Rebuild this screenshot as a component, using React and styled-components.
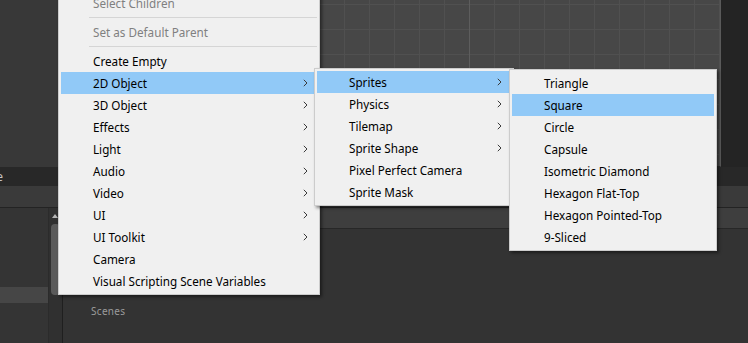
import React from "react";
import styled, { createGlobalStyle } from "styled-components";

const GlobalStyle = createGlobalStyle`
  html, body {
    margin: 0;
    padding: 0;
    background: #333333;
    overflow: hidden;
  }
  * {
    box-sizing: border-box;
  }
`;

const Screen = styled.div`
  position: relative;
  width: 748px;
  height: 343px;
  overflow: hidden;
  display: flex;
  flex-direction: column;
  background: #333333;
  font-family: "Noto Sans", "Liberation Sans", sans-serif;
`;

/* ---------- editor background ---------- */

const TopArea = styled.div`
  display: flex;
  height: 167px;
  flex-shrink: 0;
`;

const LeftDock = styled.div`
  width: 320px;
  background: #383838;
`;

const SceneView = styled.div`
  flex: 1;
  border-right: 1px solid #5a5a5a;
  border-bottom: 1px solid #2a2a2a;
  background-color: #474747;
  background-image: linear-gradient(
      to right,
      transparent 149px,
      #5d5d5d 149px,
      #5d5d5d 150px,
      transparent 150px
    ),
    linear-gradient(to right, #505050 1px, transparent 1px),
    linear-gradient(to bottom, #505050 1px, transparent 1px);
  background-size: 100% 100%, 25px 25px, 25px 25px;
  background-repeat: no-repeat, repeat, repeat;
  background-position: 0 0, 24px 4px, 24px 4px;
`;

const SideStrip = styled.div`
  width: 27px;
  background: #242424;
`;

const TabBar = styled.div`
  height: 19px;
  flex-shrink: 0;
  display: flex;
  align-items: center;
  background: #282828;
  overflow: hidden;
`;

const Tab = styled.div`
  margin-left: -42px;
  font-size: 12px;
  color: #c4c4c4;
  white-space: nowrap;
`;

const Toolbar = styled.div`
  height: 22px;
  flex-shrink: 0;
  background: #3a3a3a;
  border-bottom: 1px solid #232323;
`;

const Body = styled.div`
  flex: 1;
  display: flex;
`;

const Hierarchy = styled.div`
  width: 63px;
  display: flex;
  border-right: 1px solid #1f1f1f;
`;

const HierarchyList = styled.div`
  width: 49px;
  padding-top: 15px;
  border-right: 1px solid #2b2b2b;
  background: #343434;
`;

const HierarchyRow = styled.div`
  height: 16px;
  background: ${({ $active }) => ($active ? "#464646" : "transparent")};
`;

const Scrollbar = styled.div`
  flex: 1;
  display: flex;
  flex-direction: column;
  align-items: flex-start;
  padding: 6px 0 0 2px;
  background: #303030;
`;

const ScrollArrow = styled.div`
  width: 0;
  height: 0;
  margin-left: 1px;
  border-left: 3px solid transparent;
  border-right: 3px solid transparent;
  border-bottom: 4px solid #b4b4b4;
`;

const ScrollThumb = styled.div`
  margin-top: 6px;
  width: 9px;
  height: 71px;
  border-radius: 4px;
  background: #5a5a5a;
`;

const Project = styled.div`
  flex: 1;
  display: flex;
  flex-direction: column;
`;

const SubToolbar = styled.div`
  height: 21px;
  background: #3e3e3e;
  border-bottom: 1px solid #272727;
`;

const ProjectContent = styled.div`
  flex: 1;
  padding: 75px 0 0 28px;
  background: #333333;
`;

const FolderLabel = styled.div`
  font-size: 10px;
  color: #9b9b9b;
  letter-spacing: 0.3px;
`;

/* ---------- context menus ---------- */

const Menu = styled.div`
  position: absolute;
  left: ${({ $left }) => $left}px;
  top: ${({ $top }) => $top}px;
  width: ${({ $width }) => $width}px;
  padding: 2px;
  background: #f0f0f0;
  border: 1px solid #cccccc;
  box-shadow: 2px 2px 3px rgba(0, 0, 0, 0.45);
`;

const MenuItem = styled.div`
  height: 22px;
  display: flex;
  align-items: center;
  justify-content: space-between;
  padding: 0 9px 1px 32px;
  font-size: 11.7px;
  white-space: nowrap;
  color: ${({ $disabled }) => ($disabled ? "#808080" : "#000000")};
  background: ${({ $active }) => ($active ? "#91c9f7" : "transparent")};
`;

const Separator = styled.div`
  height: 7px;
  padding: 3px 0 0 28px;

  &::after {
    content: "";
    display: block;
    height: 1px;
    background: #d5d5d5;
  }
`;

const Chevron = () => (
  <svg width="5" height="8" viewBox="0 0 5 8">
    <path d="M0.8 0.8 L4 4 L0.8 7.2" fill="none" stroke="#3a3a3a" strokeWidth="1" />
  </svg>
);

const mainItems = [
  { label: "Create Empty" },
  { label: "2D Object", sub: true, active: true },
  { label: "3D Object", sub: true },
  { label: "Effects", sub: true },
  { label: "Light", sub: true },
  { label: "Audio", sub: true },
  { label: "Video", sub: true },
  { label: "UI", sub: true },
  { label: "UI Toolkit", sub: true },
  { label: "Camera" },
  { label: "Visual Scripting Scene Variables" },
];

const spriteItems = [
  { label: "Sprites", sub: true, active: true },
  { label: "Physics", sub: true },
  { label: "Tilemap", sub: true },
  { label: "Sprite Shape", sub: true },
  { label: "Pixel Perfect Camera" },
  { label: "Sprite Mask" },
];

const shapeItems = [
  { label: "Triangle" },
  { label: "Square", active: true },
  { label: "Circle" },
  { label: "Capsule" },
  { label: "Isometric Diamond" },
  { label: "Hexagon Flat-Top" },
  { label: "Hexagon Pointed-Top" },
  { label: "9-Sliced" },
];

const renderItems = (items) =>
  items.map((item) => (
    <MenuItem key={item.label} $active={item.active}>
      <span>{item.label}</span>
      {item.sub && <Chevron />}
    </MenuItem>
  ));

const App = () => {
  return (
    <>
      <GlobalStyle />
      <Screen>
        <TopArea>
          <LeftDock />
          <SceneView />
          <SideStrip />
        </TopArea>
        <TabBar>
          <Tab>Console</Tab>
        </TabBar>
        <Toolbar />
        <Body>
          <Hierarchy>
            <HierarchyList>
              {[0, 1, 2, 3, 4, 5].map((i) => (
                <HierarchyRow key={i} $active={i === 4} />
              ))}
            </HierarchyList>
            <Scrollbar>
              <ScrollArrow />
              <ScrollThumb />
            </Scrollbar>
          </Hierarchy>
          <Project>
            <SubToolbar />
            <ProjectContent>
              <FolderLabel>Scenes</FolderLabel>
            </ProjectContent>
          </Project>
        </Body>

        <Menu $left={58} $top={-11} $width={262}>
          <MenuItem $disabled>Select Children</MenuItem>
          <Separator />
          <MenuItem $disabled>Set as Default Parent</MenuItem>
          <Separator />
          {renderItems(mainItems)}
        </Menu>

        <Menu $left={314} $top={68} $width={200}>
          {renderItems(spriteItems)}
        </Menu>

        <Menu $left={509} $top={69} $width={208}>
          {renderItems(shapeItems)}
        </Menu>
      </Screen>
    </>
  );
};

export default App;
